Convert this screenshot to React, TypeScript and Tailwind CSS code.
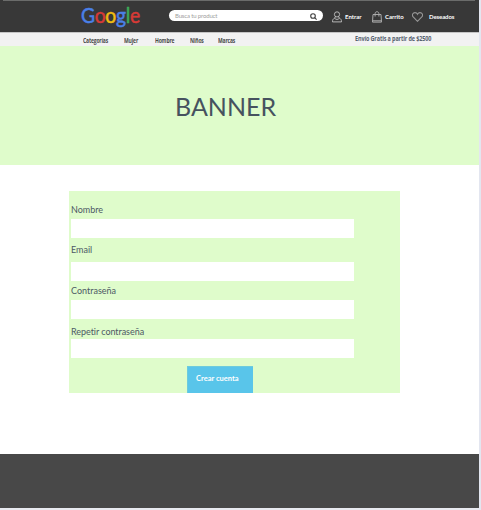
import type { ReactNode } from "react";

const LOGO = [
  { letter: "G", style: "text-[#4a80e8]" },
  { letter: "o", style: "text-[#d83a36]" },
  { letter: "o", style: "text-[#f0bd12]" },
  { letter: "g", style: "text-[#4a80e8]" },
  { letter: "l", style: "text-[#3cae57]" },
  { letter: "e", style: "text-[#d83a36]" },
];

function Logo() {
  return (
    <div className="ml-[81px] mt-[2px] w-[61px] shrink-0 origin-left scale-x-[0.94] whitespace-nowrap font-['Lato',sans-serif] text-[20.5px] leading-[25px] tracking-[-0.3px] [-webkit-text-stroke:0.5px_currentColor]">
      {LOGO.map((item, i) => (
        <span key={i} className={item.style}>{item.letter}</span>
      ))}
    </div>
  );
}

function UserIcon() {
  return (
    <svg className="h-[12px] w-[10px] shrink-0" viewBox="0 0 10 12" fill="none" stroke="#c4c4c4" strokeWidth="0.9">
      <circle cx="5" cy="3.4" r="2.6" />
      <path d="M3.400 5.800 2.700 7.200C1.200 7.700.5 8.700.5 10.900h9c0-2.200-.7-3.200-2.200-3.700L6.600 5.800" />
      <path d="M2.700 7.300c1.400 1.500 3.200 1.500 4.600 0" />
    </svg>
  );
}

function BagIcon() {
  return (
    <svg className="h-[12px] w-[10px] shrink-0" viewBox="0 0 10 12" fill="none" stroke="#ababab" strokeWidth="1">
      <path d="M1 3.500h8l.5 7.600H.5z" />
      <path d="M3.100 5.500V2.600C3.100.100 6.900.100 6.900 2.600v2.900M.6 9.800h8.800" />
    </svg>
  );
}

function HeartIcon() {
  return (
    <svg className="h-[10px] w-[11px] shrink-0" viewBox="0 0 11 10" fill="none" stroke="#969696" strokeWidth="1.100">
      <path d="M5.500 9.300 1.200 4.900C-.6 2.800 1 .6 3 .6c1.200 0 2 .6 2.500 1.600C6 1.200 6.800.6 8 .6c2 0 3.600 2.200 1.800 4.300z" />
    </svg>
  );
}

function SearchIcon() {
  return (
    <svg className="mt-[1px] h-[7px] w-[7px] shrink-0" viewBox="0 0 7 7" fill="none" stroke="#3f3f3f" strokeWidth="1.100">
      <circle cx="3" cy="3" r="2.300" />
      <path d="m4.700 4.700 1.900 1.900" />
    </svg>
  );
}

function Field({ label, labelStyle, inputStyle }: { label: string; labelStyle: string; inputStyle: string }) {
  return (
    <label className="block">
      <span className={`block whitespace-nowrap text-[9px] leading-3 text-[#4d5965] ${labelStyle}`}>{label}</span>
      <input className={`block h-[19px] w-[283px] bg-white px-1 text-[9px] outline-none ${inputStyle}`} />
    </label>
  );
}

function Action({ children, label, style, textStyle }: { children: ReactNode; label: string; style: string; textStyle: string }) {
  return (
    <a className={`flex items-center font-bold text-white ${style}`}>
      {children}
      <span className={`whitespace-nowrap text-[6px] leading-2 ${textStyle}`}>{label}</span>
    </a>
  );
}

function NavLink({ label, style }: { label: string; style: string }) {
  return (
    <a className={`shrink-0 ${style}`}>
      <span className="inline-block origin-left scale-x-[0.77] whitespace-nowrap">{label}</span>
    </a>
  );
}

export default function App() {
  return (
    <div className="flex h-[510px] w-[481px] overflow-hidden bg-[#e3e6f0] font-['Lato',sans-serif]">
      <div className="flex w-[479px] flex-col bg-white">
        <header className="h-[32px] bg-[#383838]">
          <div className="ml-[3px] h-px w-[472px] bg-[#6b6c6b]" />
          <div className="flex h-[31px]">
            <Logo />
            <div className="ml-[27px] mt-[9px] flex h-[11px] w-[154px] shrink-0 items-center justify-between rounded-full bg-white pl-[6px] pr-[6px]">
              <span className="whitespace-nowrap text-[6px] leading-2 tracking-[-0.15px] text-[#a0a0a0]">Busca tu product</span>
              <SearchIcon />
            </div>
            <Action label="Entrar" style="ml-[9px] mt-[9px] h-[13px] w-[40px]" textStyle="ml-[3px] mt-[1px]"><UserIcon /></Action>
            <Action label="Carrito" style="mt-[9px] h-[13px] w-[40px]" textStyle="ml-[3px] mt-[1px]"><BagIcon /></Action>
            <Action label="Deseados" style="mt-[9px] h-[13px] w-[52px]" textStyle="ml-[6px] mt-[1px] tracking-[-0.1px]"><HeartIcon /></Action>
          </div>
        </header>

        <nav className="flex h-[14px] border-t border-[#c5c5c5] bg-[#f2f2f2] pt-[4px] font-['Open_Sans',sans-serif] text-[6.500px] font-bold leading-[8px] tracking-[-0.2px] text-[#4b4b4b]">
          <NavLink label="Categorías" style="ml-[83px] w-[41px]" />
          <NavLink label="Mujer" style="w-[31px]" />
          <NavLink label="Hombre" style="w-[35px]" />
          <NavLink label="Niños" style="w-[28px]" />
          <NavLink label="Marcas" style="w-[137px]" />
          <span className="-mt-[2px] h-2 origin-left scale-x-[0.78] whitespace-nowrap text-[7px] font-bold tracking-[-0.15px] text-[#566170]">Envío Gratis a partir de $2500</span>
        </nav>

        <section className="flex h-[119px] bg-[#dffccb] pl-[175px] pt-[43px]">
          <h1 className="text-[25px] leading-[34px] text-[#46525f]">BANNER</h1>
        </section>

        <main className="h-[289px] pl-[69px] pt-[26px]">
          <form className="h-[202px] w-[331px] bg-[#dffccb] pl-[2px] pt-[13px]">
            <Field label="Nombre" labelStyle="" inputStyle="mt-[3px]" />
            <Field label="Email" labelStyle="mt-[6px]" inputStyle="mt-[6px]" />
            <Field label="Contraseña" labelStyle="mt-[4px]" inputStyle="mt-[3px]" />
            <Field label="Repetir contraseña" labelStyle="mt-[7px] tracking-[-0.05px]" inputStyle="mt-[1px]" />
            <button type="button" className="ml-[116px] mt-[8px] block h-[27px] w-[65.5px] border-l border-t border-[#6dcbdc] bg-[#59c5ea] pb-[3px] pl-[8px] text-left text-[7.500px] font-bold leading-3 text-white">
              Crear cuenta
            </button>
          </form>
        </main>

        <footer className="h-[54px] bg-[#484848]" />
        <div className="h-[2px] bg-[#e8eaf0]" />
      </div>
    </div>
  );
}
